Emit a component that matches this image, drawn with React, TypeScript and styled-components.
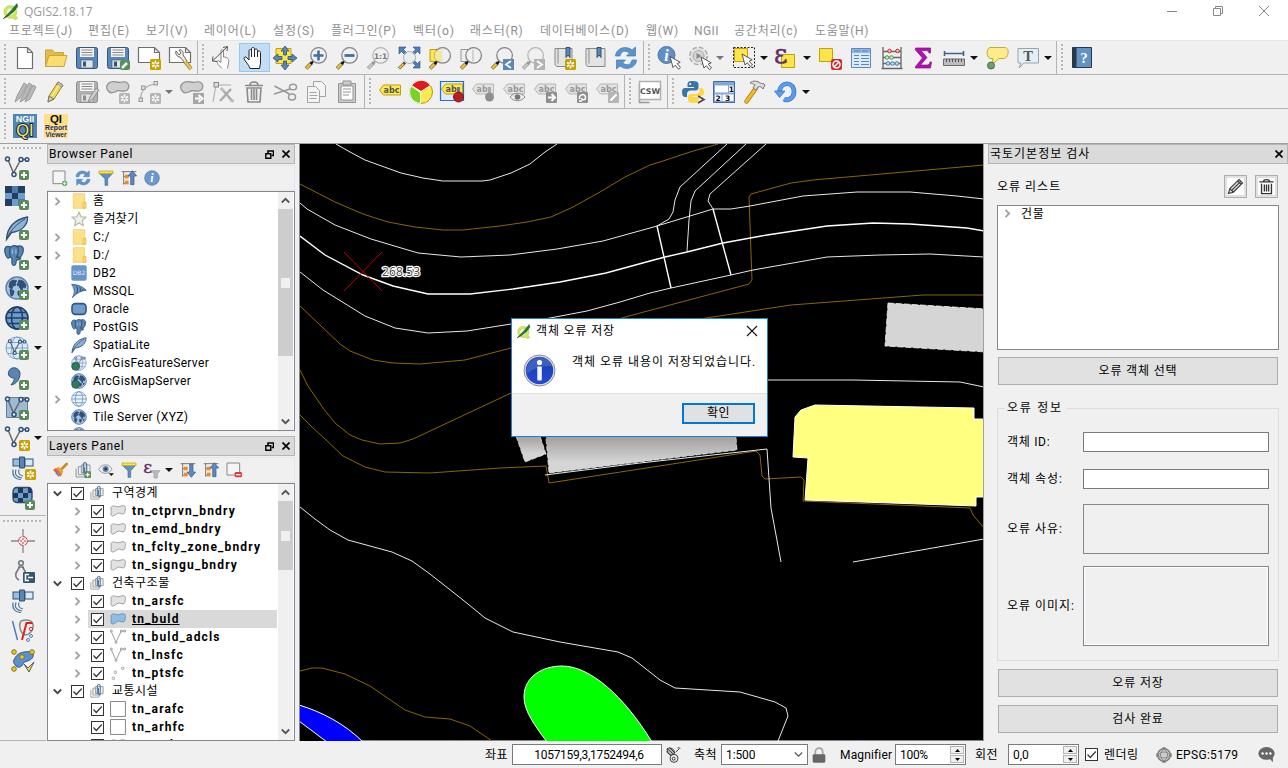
import React, { ReactNode } from "react";
import styled, { createGlobalStyle, css } from "styled-components";

const Global = createGlobalStyle`
  * { box-sizing: border-box; }
  html, body { margin: 0; padding: 0; overflow: hidden; background: #f0f0f0; }
  body { font-family: Roboto, "Noto Sans CJK KR", sans-serif; font-size: 12px; color: #000; }
`;

/* ---------- shared drawing parts ---------- */

const Plus = ({ x = 14, y = 14 }: { x?: number; y?: number }) => (
  <g>
    <rect x={x} y={y} width="10" height="10" rx="2" fill="#5a8c5a" />
    <path d={`M${x + 5} ${y + 2}v6M${x + 2} ${y + 5}h6`} stroke="#fff" strokeWidth="2" />
  </g>
);
const Star = ({ x = 13, y = 13, c = "#c9a000" }: { x?: number; y?: number; c?: string }) => (
  <g>
    <rect x={x} y={y} width="11" height="11" rx="1.5" fill={c} />
    <path
      d={`M${x + 5.5} ${y + 1.5}v8M${x + 2} ${y + 3.5}l7 4M${x + 9} ${y + 3.5}l-7 4`}
      stroke="#fff"
      strokeWidth="1.6"
    />
    <circle cx={x + 5.5} cy={y + 5.5} r="1.2" fill={c} />
  </g>
);
const Lens = ({ gray = false, children }: { gray?: boolean; children?: ReactNode }) => (
  <g>
    <path d="M2 22.5L8 16.5" stroke={gray ? "#999" : "#555"} strokeWidth="3.6" />
    <path d="M2.2 22.3L6.6 17.9" stroke={gray ? "#c4c4c4" : "#f5bf25"} strokeWidth="2.4" />
    <path d="M6.5 18L9.5 15" stroke={gray ? "#999" : "#111"} strokeWidth="2" />
    <circle cx="14.6" cy="9.4" r="7.8" fill="#eef0ee" fillOpacity={0.85} stroke={gray ? "#b5b5b5" : "#858585"} strokeWidth="1.3" />
    {children}
  </g>
);
const Pointer = ({ x, y }: { x: number; y: number }) => (
  <path
    d="M0 0l3 11 2.300-2.300 3.200 4 2-1.700-3.300-3.900 3-1.300z"
    transform={`translate(${x} ${y})`}
    fill="#fff"
    stroke="#555"
    strokeWidth="1"
  />
);
const Tag = ({ c = "#fce94f", s = "#c4a000", t = "#555", text = "abc" }: { c?: string; s?: string; t?: string; text?: string }) => (
  <g>
    <path d="M1.500 9l4-5h17v10h-17z" fill={c} stroke={s} />
    <text x="5.500" y="11.600" fontSize="8" fontFamily="DejaVu Sans" fontWeight="bold" fill={t}>
      {text}
    </text>
  </g>
);
const GrayTag = ({ text = "abc" }: { text?: string }) => <Tag c="#e3e3e3" s="#b5b5b5" t="#999" text={text} />;
const Globe = ({ fill = "#fff", stroke = "#5b84b6", sw = 1 }: { fill?: string; stroke?: string; sw?: number }) => (
  <g fill="none" stroke={stroke} strokeWidth={sw}>
    <circle cx="12" cy="12" r="11" fill={fill} />
    <ellipse cx="12" cy="12" rx="5.500" ry="11" />
    <path d="M1 12h22M3 6.500h18M3 17.500h18" />
  </g>
);
const EarthLand = (
  <g>
    <circle cx="12" cy="12" r="11" fill="#a7c1e0" stroke="#5b7fae" strokeWidth="1.400" />
    <path
      d="M5 6l3-2 4 1-2 2 1 2-3 1-1 3-3-2zM5 13l4 2-1 4-2 1zM14 4l4 1 3 4-1 3-2-1-1 4-2-3-1-2-2-1 1-2zM13 15l3 1-1 4-2-1zM18 16l2-1-1 3z"
      fill="#2f5176"
      stroke="#2f5176"
    />
  </g>
);
const VLine = ({ c = "#2d5275" }: { c?: string }) => (
  <g fill="none" stroke={c} strokeWidth="1.500">
    <path d="M3.500 5l5 12L15 5M18 3.500h2" stroke="#666" />
    <circle cx="2.500" cy="3" r="2" fill="#eef" />
    <circle cx="9" cy="18.500" r="2" fill="#eef" />
    <circle cx="16" cy="3.500" r="2" fill="#eef" />
    <circle cx="22" cy="3.500" r="1.800" fill="#eef" />
  </g>
);
const Elephant = (
  <g fill="#5a84b2" stroke="#2d5275" strokeWidth="1.300">
    <path d="M7 2C3 .500 0 3 1 8c1 4 2 7 4 7l3-2z" />
    <path d="M14 2c3-2 8-1 8 3 0 4-2 8-4 9l-3-1z" />
    <path d="M7 3c3-3 7-3 9 0 1 4 0 7-1 9l-1 2 5 1c-1 2-3 2-5 2l-.500 4c-1 3-4 3-4.500 0L9 15c-3-1-3-8-2-12z" />
    <path d="M9.500 5v5M13.500 5v5" stroke="#9dbbdd" />
  </g>
);
const Feather = (
  <g>
    <path d="M1.500 23.500C2 13 8 4 22.500 1c.500 8-6 14.500-16 15.500z" fill="#8fb1d8" stroke="#2d5275" strokeWidth="1.300" />
    <path d="M1.500 23.500C5 14 12 8 20 3" stroke="#2d5275" fill="none" />
  </g>
);
const Floppy = ({ c = "#5a86b8", d = "#33587f" }: { c?: string; d?: string }) => (
  <g>
    <path d="M3.500 1.500h17a2 2 0 0 1 2 2v17a2 2 0 0 1-2 2h-17a2 2 0 0 1-2-2v-17a2 2 0 0 1 2-2z" fill={c} stroke={d} />
    <rect x="5" y="2" width="14" height="9" fill="#f4f4f4" />
    <path d="M6.500 4h11M6.500 6.500h11M6.500 9h11" stroke="#8a8a8a" />
    <rect x="6" y="14" width="12" height="8" fill="#e2e2e2" stroke={d} strokeWidth=".600" />
    <rect x="8" y="15.500" width="3" height="5" fill={d} />
  </g>
);
const Polygon = ({ c = "#cfcfcf", s = "#8f8f8f" }: { c?: string; s?: string }) => (
  <path d="M3 3c5-4 8 1 13-1 8-2 9 8 3 9-4 1-6-2-10 1-7 3-11-5-6-9z" fill={c} stroke={s} strokeWidth="1.200" />
);
const LayerPolygon = ({ c, s }: { c: string; s: string }) => (
  <path
    d="M1.500 7C3 3 7 4.500 10 5.500c3 .700 7-1.500 10-1.500 4 0 3.500 5 2.500 8 0 4-2 5-5 4-4-1.500-6-1-9 1.500-3 2.500-7 3-7-1 0-3 .500-5 0-9.500z"
    fill={c}
    stroke={s}
    strokeWidth="1.400"
  />
);
const Sheet = ({ x = 4, w = 15, h = 21 }: { x?: number; w?: number; h?: number }) => (
  <path d={`M${x} 1.500h${w - 5}l5 5v${h - 5}h-${w}z M${x + w - 5} 1.500v5h5`} fill="#fff" stroke="#6f6f6f" strokeWidth="1.200" />
);
const Satellite = (
  <g>
    <rect x="2" y="3" width="7" height="7" fill="#9bbbe0" stroke="#2d5275" />
    <rect x="14" y="3" width="8" height="7" fill="#dbe7f4" stroke="#2d5275" />
    <path d="M8.500 1h5v11h-5z" fill="#5a84b2" stroke="#2d5275" />
    <path d="M8 13.500C7 17 8 19 12 20M5 13.500c-2 5 1 8 6 8.500M2 13.500c-1 6 2 10 8 10" fill="none" stroke="#55799f" strokeWidth="1.200" />
  </g>
);
const Funnel = (
  <g>
    <path d="M2 5h20l-7.500 8v10h-4V13z" fill="#5f8fc4" stroke="#41688f" />
    <path d="M1.500 1.500h21v4h-21z" fill="#fbe44c" stroke="#b99b00" />
  </g>
);
const Refresh = (
  <g fill="#5b93cd" stroke="#4279b3" strokeWidth=".700">
    <path d="M1.500 10C2 2 12-1 18 4l3.500-3v9h-9l3-3C11 4 7 5 6 10z" />
    <path d="M22.500 14C22 22 12 25 6 20l-3.500 3v-9h9l-3 3c4.500 3 8.500 2 9.500-3z" />
  </g>
);
const InfoDot = (
  <g>
    <circle cx="12" cy="12" r="11" fill="#6a98cc" stroke="#4c76a6" />
    <text x="12" y="18" textAnchor="middle" fontFamily="Liberation Serif" fontStyle="italic" fontWeight="bold" fontSize="18" fill="#fff">i</text>
  </g>
);
const Sheets = (
  <g fill="#eee" stroke="#8b8f94" strokeWidth="1.400">
    <path d="M1.500 10v12.500h14v-3" fill="none" />
    <path d="M5 7h13v12H5z" />
    <path d="M9.500 4.500h13v12h-13z" />
    <path d="M12.500 17V4c0-4 5-4 5 0v12c0 3-3 3-3 0V7" fill="none" stroke="#4d75a0" strokeWidth="1.800" />
  </g>
);
const TreeArrow = ({ up }: { up: boolean }) => (
  <g>
    <path d="M1 2.500h22M4 3v19M4 10h5M4 20h5" stroke="#777" strokeWidth="1.500" fill="none" />
    <rect x="6" y="7" width="5.500" height="5.500" fill="#f08a24" />
    <rect x="6" y="16" width="5.500" height="5.500" fill="#f08a24" />
    <path
      d={up ? "M17 1l6.500 8h-4v13h-5V9h-4z" : "M17 23l6.500-8h-4V3h-5v12h-4z"}
      fill="#5b8ac0"
      stroke="#315a86"
    />
  </g>
);
const Epsilon = () => (
  <text x="-1" y="16.500" fontFamily="DejaVu Serif" fontSize="26" fill="#5e2f6c" stroke="#5e2f6c" strokeWidth=".5">ε</text>
);
const Logo = (
  <g>
    <path d="M13 4C6 3 2 8 3 14c1 6 7 9 12 7l4 3 3-3-3-3c4-5 1-13-6-14z" fill="#d3e26a" stroke="#b7cc3c" />
    <path d="M13 8c-4-1-6 2-6 5s3 5 6 4 5-8 0-9z" fill="#f7fadf" />
    <path d="M2 22C8 16 13 11 21 1l1 4C18 12 10 18 2 22z" fill="#1f7a33" stroke="#0d5a22" />
  </g>
);

const art: Record<string, ReactNode> = {
  logo: Logo,
  newDoc: <Sheet x={4.5} />,
  open: (
    <g stroke="#c9a436">
      <path d="M1.500 20V4h7l2 2.500h9V20z" fill="#e3bb49" />
      <path d="M1.500 20.500L5 9.500h18l-3 11z" fill="#fbdc70" />
    </g>
  ),
  save: <Floppy />,
  saveAs: (
    <g>
      <Floppy />
      <rect x="14" y="14" width="10" height="10" rx="2" fill="#55915b" />
      <path d="M16 22l5-5" stroke="#fff" strokeWidth="2.500" />
    </g>
  ),
  composer: (
    <g>
      <Sheet x={1.5} w={21} h={15} />
      <Star />
    </g>
  ),
  composerManage: (
    <g>
      <Sheet x={1.5} w={21} h={15} />
      <path d="M8 5c-1 3 1 6 4 6l5 6 2-2-4-6c1-4-2-6-4-5l2 3-2 2z" fill="#eee" stroke="#666" />
      <path d="M17 15.500l6 7.500" stroke="#a8862b" strokeWidth="4" />
      <path d="M17 15.500l6 7.500" stroke="#e8c04b" strokeWidth="2.500" />
    </g>
  ),
  touch: (
    <g fill="#fff" stroke="#888">
      <path d="M11 22.500c-4-4-6-6-4-8l3 2V5c0-2 2.500-2 2.500 0v6c4 0 6 2 5 6l-1 5.500" />
      <path d="M1.500 15L16 1M12 1.500l4.500-1-.5 4.500M6 15.500l-4.500-.5.500-4.500" fill="none" stroke="#555" />
    </g>
  ),
  pan: (
    <path
      d="M8 22.500c-1-4-5-7-6-10 0-2 2-2 3-.500l2 2V5c0-2 2.500-2 2.500 0v-2c0-2 3-2 3 0v1.500c0-2 3-2 3 0V6c1-2 3-1 3 1v10l-1 5.500z M9.500 5v6M12.500 4v7M15.500 6v5"
      fill="#fff"
      stroke="#222"
    />
  ),
  panSel: (
    <g>
      <path d="M3 2.500h15v15H3z" fill="#fbe44c" stroke="#c4a000" />
      <path
        d="M12 0l4 5h-2.500v4h-3V5H8zM12 24l4-5h-2.500v-4h-3v4H8zM0 12l5-4v2.500h4v3H5V16zM24 12l-5-4v2.500h-4v3h4V16z"
        fill="#5a86b8"
        stroke="#2d5275"
        strokeWidth=".800"
      />
    </g>
  ),
  zoomIn: <Lens><path d="M14.500 4.500v10M9.500 9.500h10" stroke="#41709f" strokeWidth="2.600" /></Lens>,
  zoomOut: <Lens><path d="M9.500 9.500h10" stroke="#41709f" strokeWidth="2.800" /></Lens>,
  zoomNative: (
    <Lens gray>
      <text x="14.600" y="12.500" textAnchor="middle" fontFamily="DejaVu Sans" fontWeight="bold" fontSize="7.500" fill="#777">1:1</text>
    </Lens>
  ),
  zoomFull: (
    <g>
      <path d="M2 1h7L6.500 3.500 10 7 8 9 4.500 5.500 2 8zM23 1h-7l2.500 2.500L15 7l2 2 3.500-3.500L23 8zM23 22h-7l2.500-2.500L15 16l2-2 3.500 3.500L23 15z" fill="#4f7fb4" stroke="#2d5275" strokeWidth=".600" />
      <path d="M2 22.500L8 16.500" stroke="#444" strokeWidth="3" />
      <path d="M2.200 22.300L6.600 17.900" stroke="#f5bf25" strokeWidth="2" />
      <circle cx="12.500" cy="11.500" r="6" fill="#e9eef2" fillOpacity=".8" stroke="#aaa" />
    </g>
  ),
  zoomSel: (
    <g>
      <path d="M2 3.500h12v12H2z" fill="#fbe44c" stroke="#c4a000" />
      <Lens />
      <path d="M8 5h6v10h-5c-3-2-3-7-1-10z" fill="#f2e79a" />
    </g>
  ),
  zoomLayer: (
    <g>
      <path d="M2 3.500h12v12H2z" fill="#eee" stroke="#999" />
      <Lens />
      <path d="M14 4v11" stroke="#bbb" />
    </g>
  ),
  zoomLast: (
    <g>
      <Lens />
      <rect x="13" y="13" width="11" height="11" fill="#5a86b8" />
      <path d="M21 15l-5 3.500 5 3.500" stroke="#fff" strokeWidth="1.800" fill="none" />
    </g>
  ),
  zoomNext: (
    <g>
      <Lens gray />
      <rect x="13" y="13" width="11" height="11" fill="#b3b3b3" />
      <path d="M16 15l5 3.500-5 3.500" stroke="#fff" strokeWidth="1.800" fill="none" />
    </g>
  ),
  bookNew: (
    <g>
      <path d="M3 2.500h17v18H6c-2 0-3-1-3-3z M6 3v14.500" fill="#e3e3e3" stroke="#888" />
      <path d="M14 1.500h4v10l-2-2.500-2 2.500z" fill="#5a86b8" stroke="#2d5275" />
      <Star />
    </g>
  ),
  book: (
    <g>
      <path d="M3 2.500h19v18H6c-2 0-3-1-3-3z M6 3v14.500" fill="#e3e3e3" stroke="#888" />
      <path d="M14 1.500h4v10l-2-2.500-2 2.500z" fill="#5a86b8" stroke="#2d5275" />
    </g>
  ),
  refresh: Refresh,
  identify: (
    <g>
      <circle cx="9.500" cy="9" r="8.500" fill="#5f8fc7" stroke="#4c76a6" />
      <text x="9.500" y="14.500" textAnchor="middle" fontFamily="Liberation Serif" fontStyle="italic" fontWeight="bold" fontSize="16" fill="#fff">i</text>
      <Pointer x={13} y={10.5} />
    </g>
  ),
  action: (
    <g>
      <circle cx="10.500" cy="10" r="8.500" fill="#e4e4e4" stroke="#aaa" strokeWidth="2" strokeDasharray="4.500 2.200" />
      <circle cx="10.500" cy="10" r="8" fill="#e4e4e4" />
      <circle cx="10.500" cy="10" r="5.500" fill="#d5d5d5" stroke="#aaa" />
      <path d="M8.500 7v6l5-3z" fill="#888" />
      <Pointer x={13} y={11} />
    </g>
  ),
  select: (
    <g>
      <path d="M1.500 1.500h21v20h-21z" fill="none" stroke="#222" strokeDasharray="2 1.500" />
      <path d="M2.500 2.500h13v13h-13z" fill="#fbe44c" stroke="#c4a000" />
      <Pointer x={10} y={8} />
    </g>
  ),
  selectExpr: (
    <g>
      <path d="M6.500 8.500h13v13h-13z" fill="#fbe44c" stroke="#c4a000" />
      <Epsilon />
    </g>
  ),
  deselect: (
    <g>
      <path d="M1.500 2.500h13v13h-13z" fill="#fbe44c" stroke="#c4a000" />
      <rect x="13" y="13" width="11" height="11" rx="2" fill="#d7282c" />
      <circle cx="18.500" cy="18.500" r="3.500" fill="none" stroke="#fff" strokeWidth="1.500" />
      <path d="M16 21l5-5" stroke="#fff" strokeWidth="1.500" />
    </g>
  ),
  table: (
    <g>
      <path d="M2.500 2.500h19v19h-19z" fill="#dcebfa" stroke="#5b87bb" />
      <path d="M3 3h18v4H3z" fill="#8fb6e2" />
      <path d="M5 5h6M13 5h6M5 9.500h5M12 9.500h8M5 12.500h5M12 12.500h8M5 15.500h5M12 15.500h8M5 18.500h5M12 18.500h8" stroke="#5b87bb" />
    </g>
  ),
  abacus: (
    <g fill="none">
      <path d="M3 1v21M21 1v21M3 5.500h18M3 11.500h18M3 17.500h18M1.500 22.500h21" stroke="#666" strokeWidth="1.300" />
      <g fill="#f7b9b9" stroke="#c9302c"><circle cx="9.500" cy="5" r="1.800" /><circle cx="17.500" cy="5" r="1.800" /></g>
      <g fill="#c6efc6" stroke="#4a9a4a"><circle cx="7" cy="11.500" r="1.800" /><circle cx="11.500" cy="11.500" r="1.800" /></g>
      <g fill="#c4dcf5" stroke="#3f7ab5"><circle cx="8" cy="17.500" r="1.800" /><circle cx="12.500" cy="17.500" r="1.800" /><circle cx="17" cy="17.500" r="1.800" /></g>
    </g>
  ),
  sigma: <path d="M4.500 2h15v5h-1.500c-.500-2-1.500-2.500-4-2.500h-4l6 7-6.500 7.500H15c2.500 0 3.500-.500 4-3h1.500l-1 6h-15v-1.500L11.500 12 4.500 4z" fill="#b012b0" stroke="#8a0d8a" strokeWidth=".700" />,
  measure: (
    <g>
      <path d="M2.500 7.500h19M2.500 5v5M21.500 5v5" stroke="#3f648b" strokeWidth="1.600" />
      <path d="M1.500 13h21v6.500h-21z" fill="#bcbcbc" stroke="#6a6a6a" />
      <path d="M4.500 13v3M7.500 13v3M10.500 13v3M13.500 13v3M16.500 13v3M19.500 13v3" stroke="#555" />
    </g>
  ),
  mapTip: (
    <g>
      <path d="M5 1.500h14c4 0 4.500 3 4 6s-2 5-5 5h-4l-7 6 1-6H6c-5 0-5-10-1-11z" fill="#fcec8a" stroke="#c4a836" />
      <circle cx="6" cy="19.500" r="3.500" fill="#6da06d" stroke="#3f743f" />
    </g>
  ),
  textNote: (
    <g>
      <path d="M2 2.500h20.500v14.500H8L3 22l2-5H2z" fill="#e4eff5" stroke="#9aa5ab" />
      <text x="12" y="14.500" textAnchor="middle" fontFamily="Liberation Serif" fontWeight="bold" fontSize="14.500" fill="#555">T</text>
    </g>
  ),
  help: (
    <g>
      <path d="M2.500 1.500h19v20h-19z" fill="#6391c4" stroke="#26384a" />
      <path d="M2.500 1.500h4v20h-4z" fill="#26384a" />
      <text x="14" y="16.500" textAnchor="middle" fontFamily="Liberation Serif" fontWeight="bold" fontSize="15" fill="#fff">?</text>
    </g>
  ),
  pencils: (
    <path d="M2 22l2-6L11 3l3 2L7 18zM7 22l2-5 7-14 3 2-7 14zM12 22l2-5 6-12 3 2-6 12z" fill="#b9b9b9" stroke="#9a9a9a" />
  ),
  pencil: (
    <g>
      <path d="M4 22l1-6L14 2l5 3L10 19z" fill="#f3da55" stroke="#998223" />
      <path d="M4 22l1-6 5 3z" fill="#d9c9a8" stroke="#777" />
      <path d="M14 2l5 3-1 2-5-3z" fill="#ccc" stroke="#888" />
      <path d="M8 16l7-11" stroke="#fff4a8" />
    </g>
  ),
  saveEdits: (
    <g>
      <Floppy c="#b1b1b1" d="#8d8d8d" />
      <path d="M13 22l2-5 6-9 3 2-7 10z" fill="#ccc" stroke="#8f8f8f" />
    </g>
  ),
  addFeature: (
    <g>
      <Polygon />
      <Star c="#b5b5b5" />
    </g>
  ),
  addCurve: (
    <g>
      <path d="M3.500 19C4 10 9 5 19 4" fill="none" stroke="#aaa" strokeWidth="1.200" />
      <g fill="#ddd" stroke="#999"><rect x="2" y="18" width="3.500" height="3.500" /><rect x="4.500" y="6" width="3.500" height="3.500" /><rect x="17" y="1.500" width="3.500" height="3.500" /></g>
      <Star c="#b5b5b5" />
    </g>
  ),
  moveFeature: (
    <g>
      <Polygon />
      <rect x="13" y="13" width="11" height="11" fill="#a6a6a6" />
      <path d="M15 18.500h5M18.500 15l4 3.500-4 3.500" stroke="#fff" strokeWidth="2" fill="none" />
    </g>
  ),
  nodeTool: (
    <g stroke="#aaa" fill="none">
      <path d="M2 22L5 5h15" />
      <rect x="3" y="2.500" width="4.500" height="4.500" fill="#ddd" stroke="#888" />
      <path d="M10 8l12 14M20 9L9 21" strokeWidth="2.400" />
      <path d="M9 9l4 1M19 21l4-1" strokeWidth="2" stroke="#c2c2c2" />
    </g>
  ),
  trash: (
    <g fill="none" stroke="#8a8a8a" strokeWidth="1.600">
      <path d="M3 5.500h18M8 5C8 1 16 1 16 5M5 8l1 14h12l1-14zM9.500 9v11M12 9v11M14.500 9v11" />
    </g>
  ),
  cut: (
    <g fill="none" stroke="#999" strokeWidth="1.500">
      <path d="M1.500 6l15 8M1 14l16-5" />
      <ellipse cx="20" cy="7" rx="3.500" ry="2.800" />
      <ellipse cx="19" cy="17" rx="3.500" ry="3" />
    </g>
  ),
  copy: (
    <g fill="#f4f4f4" stroke="#a3a3a3">
      <path d="M9.500 1.500h8l4 4v11h-12z" />
      <path d="M3.500 6.500h8l4 4v12h-12z" />
      <path d="M5.500 12.500h7M5.500 15.500h8M5.500 18.500h7" />
    </g>
  ),
  paste: (
    <g fill="#ccc" stroke="#949494">
      <path d="M3.500 3.500h17v19h-17z" />
      <path d="M6 6h12v14H6z" fill="#fff" />
      <path d="M8 1h8v4H8z" />
      <path d="M8 9h8M8 12h8M8 15h6" />
    </g>
  ),
  label: <g transform="translate(0 1)"><Tag /></g>,
  diagram: (
    <g stroke="#fff" strokeWidth="1">
      <circle cx="12" cy="12" r="11.500" fill="#fce94f" stroke="#b59a00" />
      <path d="M12 11.500L2.500 5.500C8-1.500 17-1.500 21.500 5.500z" fill="#e01b1b" />
      <path d="M11.500 12.500v11C2 23-1.500 13 2 6z" fill="#79d326" />
    </g>
  ),
  labelPin: (
    <g>
      <path d="M.5 1.500h23v19H.5z" fill="#dcecff" stroke="#1d6fe0" strokeWidth="1.200" />
      <Tag text="ab" />
      <path d="M18.500 7v10" stroke="#777" strokeWidth="3" />
      <circle cx="18.500" cy="17" r="5" fill="#b51f22" stroke="#8a1416" />
    </g>
  ),
  labelPinGray: (
    <g>
      <GrayTag text="ab" />
      <path d="M18.500 7v10" stroke="#aaa" strokeWidth="3" />
      <circle cx="18.500" cy="17" r="4.500" fill="#8f8f8f" />
    </g>
  ),
  labelEye: (
    <g>
      <GrayTag />
      <path d="M8 17c4-5 11-5 15 0-4 5-11 5-15 0z" fill="#eee" stroke="#888" />
      <circle cx="15.500" cy="17" r="2.800" fill="#777" />
    </g>
  ),
  labelMove: (
    <g>
      <GrayTag />
      <rect x="13" y="12" width="11" height="11" rx="1" fill="#8f8f8f" />
      <path d="M15 17.500h5M18.500 14l3.500 3.500-3.500 3.500" stroke="#fff" strokeWidth="2" fill="none" />
    </g>
  ),
  labelRotate: (
    <g>
      <GrayTag />
      <rect x="13" y="12" width="11" height="11" rx="1" fill="#8f8f8f" />
      <path d="M15.500 19c-1-5 6-6 6-1.500 0 3-4 3-4 .500M15 21h3" stroke="#fff" strokeWidth="1.500" fill="none" />
    </g>
  ),
  labelEdit: (
    <g>
      <GrayTag />
      <rect x="13" y="12" width="11" height="11" rx="1" fill="#b5b5b5" />
      <path d="M15.500 20.500l6-6" stroke="#fff" strokeWidth="2.200" />
    </g>
  ),
  csw: (
    <g>
      <path d="M1.500 4v18.500h10" fill="none" stroke="#999" strokeWidth="1.500" />
      <path d="M1.500 1.500h21v18h-21z" fill="#fff" stroke="#b0b0b0" strokeWidth="1.500" />
      <text x="12" y="13.500" textAnchor="middle" fontFamily="DejaVu Sans" fontWeight="bold" fontSize="7.800" fill="#555">CSW</text>
    </g>
  ),
  python: (
    <g>
      <path d="M12 1c-5 0-5.500 1.500-5.500 3.500V7H13v1H4C1.500 8 1 10 1 12.500S2 17 4 17h2v-3c0-2 1.500-3.500 3.500-3.500h5c2 0 3-1 3-3V4c0-2-2-3-5.500-3z" fill="#3a75a8" />
      <circle cx="9.200" cy="4" r="1" fill="#fff" />
      <path d="M12 23c5 0 5.500-1.500 5.500-3.500V17H11v-1h9c2.500 0 3-2 3-4s-1-4-3-4h-1.500v2.500c0 2-1.500 3.500-3.500 3.500h-5c-2 0-3 1-3 3V20c0 2 2 3 5 3z" fill="#ffd643" />
      <path d="M17 16l6 3.500-6 3.500" fill="none" stroke="#444" strokeWidth="1.600" />
    </g>
  ),
  calendar: (
    <g>
      <path d="M1.500 1.500h21v21h-21z" fill="#7ea8e0" stroke="#44699c" />
      <path d="M3 5.500h13v7H3zM17 5.500h4.500v7H17zM3 14.500h6.500v6.500H3zM10.500 14.500h11v6.500h-11z" fill="#fff" />
      <g fontFamily="DejaVu Sans" fontWeight="bold" fontSize="7.500" fill="#111">
        <text x="16.700" y="12">1</text>
        <text x="3.500" y="20.600">2</text>
        <text x="13" y="20.600">3</text>
      </g>
    </g>
  ),
  hammer: (
    <g>
      <path d="M3.500 21.500L13 8" stroke="#b07e10" strokeWidth="4.500" strokeLinecap="round" />
      <path d="M3.500 21.500L13 8" stroke="#f3b92b" strokeWidth="3" strokeLinecap="round" />
      <path d="M7 3c3-3 8-2 10 0 2 1 4 0 5 2l-2 4c-1-2-3-3-5-2l-2 3-3-2 2-3c-2-1-3-2-5-2z" fill="#ddd" stroke="#777" />
    </g>
  ),
  undo: (
    <g>
      <path d="M5.500 12C6 1 20 1 20 12c0 7-7 9-10 7" fill="none" stroke="#2c6cc4" strokeWidth="4.600" />
      <path d="M5.500 12C6 1 20 1 20 12c0 7-7 9-10 7" fill="none" stroke="#5b9bee" strokeWidth="3.400" />
      <path d="M.5 11h10.500l-5.500 6.500z" fill="#5b9bee" stroke="#2c6cc4" strokeWidth=".700" />
    </g>
  ),
  ngii: (
    <g>
      <rect width="24" height="24" fill="#4e86b5" />
      <text x="12" y="8" textAnchor="middle" fontFamily="Liberation Sans" fontSize="9" fontWeight="bold" fill="#fff">NGII</text>
      <text x="12" y="22.300" textAnchor="middle" fontFamily="Liberation Sans" fontSize="16.500" fill="#f5e57a" stroke="#1a2430" strokeWidth="2" paintOrder="stroke">QI</text>
    </g>
  ),
  report: (
    <g>
      <rect width="24" height="24" fill="#ffe08a" />
      <text x="12" y="9" textAnchor="middle" fontFamily="Liberation Sans" fontSize="11.500" fontWeight="bold" fill="#111">QI</text>
      <text x="12" y="16" textAnchor="middle" fontFamily="Liberation Sans" fontSize="6.800" fontWeight="bold" fill="#222a66">Report</text>
      <text x="12" y="22.600" textAnchor="middle" fontFamily="Liberation Sans" fontSize="6.500" fontWeight="bold" fill="#222a66">Viewer</text>
    </g>
  ),
  addVector: <g><VLine /><Plus /></g>,
  addRaster: (
    <g>
      <rect width="20" height="20" fill="#6e9bd0" />
      <path d="M0 0h7v7H0zM13 0h7v7h-7zM7 7h6v6H7zM0 13h7v7H0z" fill="#243f5e" />
      <path d="M7 0h6v7H7zM13 13h7v7h-7z" fill="#4d79ab" />
      <Plus />
    </g>
  ),
  addSpatialite: <g>{Feather}<Plus /></g>,
  addPostgis: <g><g transform="translate(-1 -1) scale(.88)">{Elephant}</g><Plus /></g>,
  addWms: <g>{EarthLand}<Plus /></g>,
  addWcs: <g><Globe fill="#6e9bd0" stroke="#1f3f60" sw={1.6} /><Plus /></g>,
  addWfs: <g><Globe fill="#dce9f7" stroke="#7ea3cc" /><g transform="translate(3 3) scale(.75)"><VLine /></g><Plus /></g>,
  addText: <g><path d="M4 5c2-5 10-4 11 2 0 7-4 11-9 12 2-3 4-5 3-7-4 0-7-3-5-7z" fill="#5a84b2" stroke="#2d5275" /><Plus /></g>,
  addVirtual: <g><path d="M1.500 1.500h21v20h-21z" fill="#9fb9d4" stroke="#5d7f9f" /><VLine /><Plus /></g>,
  newVector: <g><VLine /><Star x={14} y={14} /></g>,
  satNew: <g>{Satellite}<Star x={14} y={13} /></g>,
  rasterNew: (
    <g>
      <path d="M6 1.500h11c3 0 4 2 4 5v5c0 3-1 5-4 5H6c-3 0-4-2-4-5v-5c0-3 1-5 4-5z" fill="#6e9bd0" stroke="#2d4a68" strokeWidth="1.400" />
      <path d="M7 2h5v5H7zM17 2h2l2 3v2h-4zM12 7h5v5h-5zM2 7h5v5H2zM7 12h5v4H7z" fill="#1f3a58" />
      <Plus />
    </g>
  ),
  crosshair: (
    <g fill="none">
      <path d="M12 0v8M12 16v8M0 12h8M16 12h8" stroke="#888" strokeWidth="1.300" />
      <circle cx="12" cy="12" r="4.500" stroke="#d33" strokeDasharray="5 2" />
      <path d="M12 9v6M9 12h6" stroke="#d33" strokeDasharray="2 2" />
    </g>
  ),
  compass: (
    <g fill="none" stroke="#777" strokeWidth="1.600">
      <circle cx="10" cy="4" r="2.300" />
      <path d="M8.500 8L5 14c-1 4 1 6 3 7M11.500 8l3 5M7 8h6" />
      <rect x="12" y="13" width="12" height="11" rx="1" fill="#34566e" stroke="none" />
      <path d="M18 15.500h-3.500v6H18M17 18.500h5" stroke="#fff" />
    </g>
  ),
  satellite: Satellite,
  topology: (
    <g fill="none">
      <path d="M10 2c6-2 13-1 12 6 0 4-4 8-8 8-4-1-7-9-4-14z" stroke="#888" fill="#eee" strokeWidth="1.500" />
      <path d="M1.500 2l5 19" stroke="#4c7fbd" strokeWidth="1.500" />
      <path d="M11 21l4.500-17h6" stroke="#d22" strokeWidth="2" />
      <circle cx="20" cy="10" r="1.700" stroke="#d22" />
      <circle cx="20" cy="17" r="1.500" stroke="#4c7fbd" />
      <circle cx="17" cy="21" r="1.500" stroke="#4c7fbd" />
    </g>
  ),
  validate: (
    <g>
      <path d="M4 9c3-6 10-7 18-6 2 7-4 9-9 10-1 4-5 7-8 4s-3-6-1-8z" fill="#5c8fd0" stroke="#315a86" />
      <g fill="#e9c829" stroke="#8a7510"><circle cx="3" cy="3" r="2.300" /><circle cx="21" cy="3" r="2.300" /><circle cx="3" cy="20" r="2.300" /><circle cx="11" cy="8" r="2.300" /></g>
      <path d="M13 15l4 4 6-6-5 10z" fill="#ffe14a" stroke="#555" />
    </g>
  ),
  addSel: <g><path d="M1.500 1.500h18v19h-18z" fill="#f5f5f5" stroke="#888" strokeWidth="1.500" /><circle cx="19" cy="20" r="4" fill="#6da06d" /><path d="M19 17.500v5M16.500 20h5" stroke="#dfd" strokeWidth="1.500" /></g>,
  removeSel: <g><path d="M1.500 1.500h19v18h-19z" fill="#f5f5f5" stroke="#888" strokeWidth="1.500" /><rect x="13" y="15" width="11" height="8" rx="2" fill="#e23b3b" /><path d="M15 19h7" stroke="#fff" strokeWidth="2" /></g>,
  filter: Funnel,
  collapse: <TreeArrow up />,
  expand: <TreeArrow up={false} />,
  info: InfoDot,
  folder: (
    <g>
      <path d="M3.500 1h17v22h-17z" fill="#fde08a" stroke="#ecc85a" />
      <path d="M18 14h4.500v9H18z" fill="#f8d570" stroke="#e2b93e" />
    </g>
  ),
  star: <path d="M12 1.500l3 7 7.500.8-5.600 5 1.600 7.700L12 18l-6.500 4 1.600-7.700-5.600-5L9 8.500z" fill="#f0f0ea" stroke="#b3b5a5" strokeWidth="1.600" />,
  db2: (
    <g>
      <rect x=".5" y=".5" width="23" height="23" rx="3" fill="#6693c8" />
      <text x="12" y="15.200" textAnchor="middle" fontFamily="DejaVu Sans" fontSize="9" fill="#e4edf8">DB2</text>
    </g>
  ),
  mssql: (
    <g>
      <path d="M1 2c9 0 17 4 22 9-7 0-14 4-21 11 4-7 4-12-1-20z" fill="#6b96c8" stroke="#33587f" strokeWidth="1.200" />
      <path d="M8 4c3 5 2 9 0 12M13 6c2 3 2 5 1 7M18 9l-1 3" fill="none" stroke="#33587f" strokeWidth="1.600" />
    </g>
  ),
  oracle: <rect x="1.500" y="4" width="21" height="16" rx="5" fill="#6f9bd1" stroke="#33567c" strokeWidth="2.400" />,
  elephant: Elephant,
  feather: Feather,
  arcFeature: <g><Globe fill="#dce9f7" stroke="#7ea3cc" /><g transform="translate(5 2) scale(.7)"><VLine /></g><circle cx="7" cy="17" r="6" fill="#2c7f52" stroke="#1e3f6a" /></g>,
  arcMap: <g>{EarthLand}<circle cx="7" cy="17" r="6" fill="#2c7f52" stroke="#1e3f6a" /></g>,
  ows: <Globe fill="#eef4fb" stroke="#6e98c9" sw={1.3} />,
  earth: EarthLand,
  brush: (
    <g>
      <path d="M14 11l8-8" stroke="#c78a2b" strokeWidth="4" strokeLinecap="round" />
      <path d="M2 12l8-5 7 7-4 8z" fill="#e8a23a" />
      <path d="M2 11l4-2 9 9-2 4z" fill="#ea7a3a" />
      <path d="M2 12l4-1 4 4-3 3z" fill="#e05a50" />
      <path d="M5 17l3-1 4 4-2 2z" fill="#5d86c8" />
    </g>
  ),
  sheetsAdd: <g>{Sheets}<Plus /></g>,
  sheets: Sheets,
  eye: (
    <g>
      <path d="M1 11c5-9 16-9 20 0-5 8-15 8-20 0z" fill="#eee" stroke="#999" strokeWidth="1.500" />
      <circle cx="11.500" cy="10.500" r="4.500" fill="#5c83ad" />
      <circle cx="11.500" cy="10.500" r="2" fill="#1e3248" />
      <path d="M16 17h8l-4 4z" fill="#111" />
    </g>
  ),
  exprFilter: <g><Epsilon /><path d="M11 13h13l-4 4.500V24h-5v-6.500z" fill="#bbb" stroke="#999" /></g>,
  poly: <LayerPolygon c="#e2e2e2" s="#999" />,
  polyBlue: <LayerPolygon c="#8fbde4" s="#5f92c0" />,
  line: (
    <g fill="none" stroke="#888" strokeWidth="1.200">
      <path d="M2 4l7 16L17 3h6" />
      <circle cx="2" cy="3" r="1.500" fill="#fff" /><circle cx="9" cy="20" r="1.500" fill="#fff" /><circle cx="17" cy="3" r="1.500" fill="#fff" /><circle cx="22" cy="3" r="1.500" fill="#fff" />
    </g>
  ),
  points: (
    <g fill="#eee" stroke="#999" strokeWidth="1.200">
      <circle cx="5" cy="20" r="2" /><circle cx="8" cy="11" r="2" /><circle cx="19" cy="5" r="2" />
    </g>
  ),
  swatch: <path d="M.8.8h22.400v22.400H.8z" fill="#fff" stroke="#888" strokeWidth="1.500" />,
  editDark: (
    <g>
      <rect width="24" height="24" fill="#fff" />
      <path d="M2 22l2-7L17 2l5 5L9 20zM4 15l5 5M7 17L19 5M15 4l5 5" fill="#ddd" stroke="#333" strokeWidth="1.500" />
    </g>
  ),
  trashDark: (
    <g fill="none" stroke="#333" strokeWidth="1.900">
      <rect width="24" height="24" fill="#fff" stroke="none" />
      <path d="M2 5.500h20M8 4.500c0-3 8-3 8 0M5 8v14h14V8M9 9v10M12 9v10M15 9v10" />
    </g>
  ),
  mouse: (
    <g fill="none" stroke="#333" strokeWidth="1.400">
      <path d="M3 3c6-4 12 1 11 6s-8 3-10-1z" fill="#bbb" />
      <path d="M3 2l12 11M7 1l8 8M2 7l11 10M21 3l-5 5M19 1l4 1" />
      <circle cx="13.500" cy="17" r="6" fill="#eee" />
      <circle cx="13" cy="17.500" r="2.200" />
    </g>
  ),
  lock: (
    <g>
      <path d="M6.500 12V7c0-7 11-7 11 0v5" fill="none" stroke="#a5a5a5" strokeWidth="2.600" />
      <rect x="2.500" y="11" width="19" height="12.500" rx="2" fill="#666" />
    </g>
  ),
  crs: (
    <g>
      <path d="M12 0v24M0 12h24" stroke="#999" strokeWidth="5" />
      <circle cx="12" cy="12" r="9.500" fill="#ccc" stroke="#777" strokeWidth="2" />
      <path d="M12 3c-7 5-7 13 0 18 7-5 7-13 0-18zM3 12c5-6 13-6 18 0-5 6-13 6-18 0z" fill="none" stroke="#888" strokeWidth="1.500" />
    </g>
  ),
  bubble: (
    <g>
      <ellipse cx="12" cy="10.500" rx="11.500" ry="9" fill="#666" />
      <path d="M15 16l6 7v-9z" fill="#666" />
      <circle cx="6.500" cy="10.500" r="1.700" fill="#fff" /><circle cx="12" cy="10.500" r="1.700" fill="#fff" /><circle cx="17.500" cy="10.500" r="1.700" fill="#fff" />
    </g>
  ),
};

const Svg = styled.svg`
  display: block;
  flex: none;
`;
const IconSvg = styled(Svg)`
  overflow: visible;
`;
const Icon = ({ name, size = 24 }: { name: string; size?: number }) => (
  <IconSvg width={size} height={size} viewBox="0 0 24 24">{art[name]}</IconSvg>
);

/* ---------- window chrome ---------- */

const Window = styled.div`
  width: 1288px;
  height: 768px;
  display: flex;
  flex-direction: column;
  background: #f0f0f0;
`;
const Label = styled.span<{ $ls?: number; $w?: number; $bold?: boolean; $under?: boolean }>`
  white-space: nowrap;
  letter-spacing: ${(p) => p.$ls ?? 0}px;
  font-size: 12px;
  line-height: 16px;
  ${(p) => p.$w && css`width: ${p.$w}px; flex: none;`}
  ${(p) => p.$bold && css`font-weight: 700;`}
  ${(p) => p.$under && css`text-decoration: underline;`}
`;
const TitleBar = styled.header`
  height: 22px;
  flex: none;
  display: flex;
  align-items: center;
  background: #fff;
  padding: 0 18px 0 2px;
`;
const WindowTitle = styled.span`
  font: 12px/16px "Open Sans", sans-serif;
  color: #999;
  margin: 2px 0 0 5px;
  flex: 1;
`;
const WindowButtons = styled.div`
  display: flex;
  gap: 34px;
`;
const MenuBar = styled.nav`
  height: 19px;
  flex: none;
  display: flex;
  background: #fff;
  padding: 1px 0 0 9px;
  border-bottom: 1px solid #e6e6e6;
`;
const MenuItem = styled.span<{ $w: number; $ls: number }>`
  width: ${(p) => p.$w}px;
  letter-spacing: ${(p) => p.$ls}px;
  white-space: nowrap;
  line-height: 16px;
  color: #8f8f8f;
`;
const ToolRow = styled.div`
  height: 34px;
  flex: none;
  display: flex;
  border-bottom: 1px solid #b4b4b4;
`;
const LastToolRow = styled(ToolRow)`
  border-bottom: 0;
`;
const ToolGroup = styled.div<{ $w?: number }>`
  display: flex;
  align-items: center;
  ${(p) => (p.$w ? css`width: ${p.$w}px; border-right: 1px solid #b4b4b4;` : css`flex: 1;`)}
`;
const Grip = styled.div`
  width: 2px;
  height: 27px;
  margin: 0 4px 0 4px;
  flex: none;
  background: repeating-linear-gradient(to bottom, #b8b8b8 0 2px, transparent 2px 4px);
`;
const Tool = styled.button<{ $w?: number; $active?: boolean }>`
  width: ${(p) => p.$w ?? 31}px;
  height: 29px;
  flex: none;
  display: flex;
  align-items: center;
  gap: 4px;
  padding: 0 2px;
  border: 1px solid ${(p) => (p.$active ? "#90c8f6" : "transparent")};
  background: ${(p) => (p.$active ? "#c2ddf4" : "transparent")};
`;
const Caret = ({ gray = false }: { gray?: boolean }) => (
  <Svg width="8" height="4" viewBox="0 0 8 4"><path d="M0 0h8L4 4z" fill={gray ? "#777" : "#111"} /></Svg>
);

type ToolDef = string | { n: string; w?: number; gray?: boolean; active?: boolean };
const Tools = ({ items, width }: { items: ToolDef[]; width?: number }) => (
  <ToolGroup $w={width}>
    <Grip />
    {items.map((it) => {
      const d = typeof it === "string" ? { n: it } : it;
      return (
        <Tool key={d.n} $w={d.w} $active={d.active}>
          <Icon name={d.n} />
          {d.w && <Caret gray={d.gray} />}
        </Tool>
      );
    })}
  </ToolGroup>
);

const Body = styled.main`
  flex: 1;
  min-height: 0;
  display: flex;
  border-top: 1px solid #a0a0a0;
`;
const SideBar = styled.aside`
  width: 46px;
  flex: none;
  padding-top: 3px;
  border-bottom: 1px solid #b4b4b4;
`;
const SideGrip = styled.div`
  height: 2px;
  margin: 0 4px 4px 3px;
  background: repeating-linear-gradient(to right, #b8b8b8 0 2px, transparent 2px 4px);
`;
const SideRule = styled.div`
  border-top: 1px solid #b4b4b4;
  margin: 2px 0 4px;
`;
const SideTool = styled.div<{ $indent: number }>`
  height: 30px;
  display: flex;
  align-items: center;
  padding-left: ${(p) => p.$indent}px;
  gap: 5px;
`;
const Dock = styled.section<{ $w: number }>`
  width: ${(p) => p.$w}px;
  flex: none;
  display: flex;
  flex-direction: column;
`;
const DockTitle = styled.header`
  height: 20px;
  flex: none;
  display: flex;
  align-items: center;
  gap: 8px;
  border: 1px solid #b6b6b6;
  background: #dadada;
  padding: 0 4px 0 1px;
`;
const Grow = styled.span`
  flex: 1;
`;
const DockTools = styled.div`
  height: 26px;
  margin-top: 1px;
  flex: none;
  display: flex;
  align-items: center;
  gap: 7px;
  padding-left: 5px;
  border: 1px solid #e6e6e6;
  border-left: 0;
`;
const MenuTool = styled.span`
  display: flex;
  align-items: center;
  gap: 5px;
`;
const TreeBox = styled.div<{ $h: number; $mb?: number }>`
  height: ${(p) => p.$h}px;
  margin-bottom: ${(p) => p.$mb ?? 0}px;
  flex: none;
  display: flex;
  overflow: hidden;
  background: #fff;
  border: 1px solid #828790;
`;
const Rows = styled.div`
  flex: 1;
  min-width: 0;
`;
const BrowserRow = styled.div`
  height: 18px;
  display: grid;
  grid-template-columns: 22px 22px 1fr;
  align-items: center;
  padding-left: 1px;
`;
const ArrowCell = styled.span`
  display: flex;
  justify-content: center;
  padding-right: 5px;
`;
const LayerRow = styled.div<{ $child?: boolean }>`
  height: 18px;
  display: flex;
  align-items: center;
  padding-left: ${(p) => (p.$child ? 20 : 0)}px;
`;
const LayerBody = styled.div<{ $selected?: boolean }>`
  flex: 1;
  height: 18px;
  display: flex;
  align-items: center;
  padding-left: 3px;
  background: ${(p) => (p.$selected ? "#d9d9d9" : "transparent")};
  margin-right: 1px;
`;
const LayerArrow = styled.span`
  width: 20px;
  padding-right: 2px;
  display: flex;
  justify-content: center;
`;
const Check = styled.span`
  width: 13px;
  height: 13px;
  flex: none;
  border: 1px solid #333;
  background: #fff;
  margin-right: 6px;
`;
const Checked = () => (
  <Check><Svg width="11" height="11" viewBox="0 0 11 11"><path d="M1.500 5.500l2.800 3L9.800 2.500" fill="none" stroke="#333" strokeWidth="1.200" /></Svg></Check>
);
const Bar = styled.div`
  width: 15px;
  flex: none;
  display: flex;
  flex-direction: column;
  align-items: center;
  background: #f0f0f0;
  margin-right: 1px;
`;
const BarArrow = styled.div`
  height: 17px;
  display: flex;
  align-items: center;
`;
const Thumb = styled.div<{ $h: number }>`
  width: 15px;
  height: ${(p) => p.$h}px;
  display: flex;
  align-items: center;
  justify-content: center;
  background: #cdcdcd;
`;
const Notch = styled.span`
  width: 9px;
  height: 10px;
  background: #f0f0f0;
`;
const Chev = ({ dir, c = "#555", w = 1.8 }: { dir: "up" | "down" | "right"; c?: string; w?: number }) => (
  <Svg width="9" height="9" viewBox="0 0 9 9">
    <path
      d={dir === "up" ? "M.8 6.500l3.700-3.700 3.700 3.700" : dir === "down" ? "M.8 2.500l3.700 3.700 3.700-3.700" : "M2.500.8l3.700 3.700-3.700 3.700"}
      fill="none"
      stroke={c}
      strokeWidth={w}
    />
  </Svg>
);
const ScrollBar = ({ thumb }: { thumb: number }) => (
  <Bar>
    <BarArrow><Chev dir="up" /></BarArrow>
    <Thumb $h={thumb}><Notch /></Thumb>
    <Grow />
    <BarArrow><Chev dir="down" /></BarArrow>
  </Bar>
);
const FloatIcon = () => (
  <Svg width="9" height="9" viewBox="0 0 9 9"><path d="M3 3V1h5.500v4.500H6.500" fill="none" stroke="#000" strokeWidth="1.600" /><path d="M.8 3.800h5v4.500h-5z" fill="none" stroke="#000" strokeWidth="1.400" /></Svg>
);
const CloseIcon = () => (
  <Svg width="8" height="8" viewBox="0 0 8 8"><path d="M.5.500l7 7M7.500.500l-7 7" stroke="#000" strokeWidth="1.700" /></Svg>
);

/* ---------- map ---------- */

const MapFrame = styled.section`
  position: relative;
  width: 685px;
  flex: none;
  margin: 0 4px 0 4px;
  background: #000;
  border-left: 1px solid #828790;
  border-right: 1px solid #a0a0a0;
  border-bottom: 1px solid #828790;
`;
const white = [
  "336,144 350,152 365,160 401,173 423,178 443,181 482,181 490,180 511,173 530,164 545,152 557,144",
  "300,203 307,209 335,225 371,239 418,253 461,257 510,255 557,249 603,241 650,228 657,226 713,209 731,209 750,206 803,196 857,192 910,192 957,196 984,199",
  "300,272 323,290 365,316 395,328 428,333 467,331 511,324 550,318 587,311 620,302 650,293 671,288 731,275 753,270 827,257 880,255 930,254 984,257",
  "727,144 680,187 675,200 673,212 669,219 657,226",
  "746,144 695,191 691,201 689,220 687,251",
  "766,144 710,194 708,201 713,209",
  "767,380 853,380 960,382 984,387",
  "545,475 640,463 767,449 771,508 781,562",
  "853,562 984,539",
  "300,507 315,519 330,530 348,540 392,552 412,561 430,574 463,600 485,618 513,632 560,642 618,652 632,658 660,680 675,688 740,692 775,702 786,708 788,716 778,741",
];
const whiteBold = [
  "300,236 325,255 363,275 393,286 428,294 470,294 513,289 560,282 606,273 650,261 665,257 687,252 723,243 767,235 827,226 873,223 910,224 967,228 984,231",
  "657,226 671,288",
  "713,209 731,275",
];
const brown = [
  "300,184 335,202 363,214 388,222 415,227 443,230 463,230 500,226 527,222 551,217 573,207 600,192 625,177 650,165 663,161 690,152 718,144",
  "984,165 813,180 791,183 751,194 749,197 752,280 749,284 640,313 560,335",
  "300,306 340,344 350,351 373,360 393,363 420,364 465,360 511,348 706,318 791,305 923,295 984,295",
  "300,370 308,386 323,408 335,423 350,435 362,440 380,444 400,443 413,439 511,393",
  "300,415 312,427 325,439 343,456 365,467 385,472 430,473 500,468 546,466 549,483 640,469 756,451 760,455 762,476 765,479 801,477 804,480 803,501 970,508 973,515 984,528",
  "300,671 312,668 322,668 345,674 370,686 405,710 425,717 450,719 470,726 492,741",
];
const MapCanvas = () => (
  <Svg width="683" height="597" viewBox="300 144 683 597">
    <defs>
      <linearGradient id="shade" x1="0" y1="0" x2="0" y2="1">
        <stop offset="0" stopColor="#a0a0a0" />
        <stop offset=".7" stopColor="#d5d5d5" />
      </linearGradient>
    </defs>
    <g fill="none" stroke="#8a6508">{brown.map((p) => <polyline key={p} points={p} />)}</g>
    <path d="M516 436h24l6 18-21 8z" fill="url(#shade)" />
    <path d="M516 436l9 26 21-8-6-18" fill="none" stroke="#eee" strokeWidth=".7" strokeDasharray="5 2" />
    <path d="M546 437h190l1 13-188 23z" fill="url(#shade)" />
    <path d="M546 439l3 34 188-23-1-13" fill="none" stroke="#eee" strokeWidth=".7" strokeDasharray="5 2" />
    <path d="M888 303l98 6v43l-101-6z" fill="#d5d5d5" stroke="#f4f4f4" strokeWidth=".8" strokeDasharray="6 2" />
    <path d="M815 405l159 3v11h12v78h-10v9l-171-6 3-42-15-1 2-40 6-7z" fill="#ffff80" stroke="#fff" />
    <g fill="none" stroke="#e8e8e8">{white.map((p) => <polyline key={p} points={p} />)}</g>
    <g fill="none" stroke="#fff" strokeWidth="1.400">{whiteBold.map((p) => <polyline key={p} points={p} />)}</g>
    <path d="M299 705c23 7 46 19 64 37h-65z" fill="#0000ff" stroke="#fff" />
    <path d="M299 721l28 21h-28z" fill="#000" />
    <path d="M299 721l28 21" stroke="#fff" />
    <path d="M547 742c-12-16-23-31-23-45 0-20 18-31 38-31 28 0 62 30 90 76z" fill="#00ff00" stroke="#fff" />
    <path d="M344 252l38 39M382 252l-38 39" stroke="#c00000" />
    <text x="382" y="276" fontFamily="Open Sans" fontSize="12" fill="#444" stroke="#fff" strokeWidth="2.500" paintOrder="stroke" textLength="38">268.53</text>
  </Svg>
);

/* ---------- dialog ---------- */

const Dialog = styled.div`
  position: absolute;
  left: 211px;
  top: 174px;
  width: 257px;
  height: 119px;
  display: flex;
  flex-direction: column;
  background: #fff;
  border: 1px solid #1883d7;
`;
const DialogTitle = styled.header`
  height: 23px;
  display: flex;
  align-items: center;
  padding: 1px 9px 0 4px;
`;
const DialogText = styled.div`
  flex: 1;
  display: flex;
  align-items: flex-start;
  padding: 12px 0 0 11px;
  gap: 16px;
`;
const DialogMessage = styled.div`
  display: flex;
`;
const DialogFoot = styled.footer`
  height: 43px;
  display: flex;
  justify-content: flex-end;
  padding: 9px 12px 0;
  background: #f0f0f0;
  border-top: 1px solid #dfdfdf;
`;
const OkButton = styled.button`
  width: 73px;
  height: 21px;
  padding: 0 0 1px;
  border: 2px solid #0078d7;
  background: #e1e1e1;
  font: 12px/14px Roboto, "Noto Sans CJK KR", sans-serif;
  letter-spacing: 0.5px;
  color: #000;
`;

/* ---------- inspection dock ---------- */

const Inspect = styled.div`
  flex: 1;
  display: flex;
  flex-direction: column;
  padding: 11px 9px 0 9px;
`;
const ListHead = styled.div`
  height: 23px;
  flex: none;
  display: flex;
  align-items: center;
  gap: 8px;
  padding-right: 1px;
`;
const SquareButton = styled.button`
  width: 23px;
  height: 23px;
  padding: 2px;
  display: flex;
  border: 1px solid #adadad;
  background: #e1e1e1;
`;
const ErrorList = styled.div`
  height: 145px;
  flex: none;
  margin-top: 7px;
  background: #fff;
  border: 1px solid #828790;
  padding-left: 5px;
`;
const ErrorRow = styled.div`
  height: 15px;
  display: flex;
  align-items: center;
  gap: 9px;
`;
const WideButton = styled.button<{ $mt: number }>`
  height: 28px;
  flex: none;
  margin: ${(p) => p.$mt}px 1px 0;
  padding: 0 0 1px;
  border: 1px solid #adadad;
  background: #e1e1e1;
  color: #000;
  font: 12px/16px Roboto, "Noto Sans CJK KR", sans-serif;
  letter-spacing: 0.85px;
`;
const GroupBox = styled.fieldset`
  height: 261px;
  flex: none;
  margin: 15px 0 0;
  padding: 16px 9px 0;
  border: 1px solid #dcdcdc;
  display: flex;
  flex-direction: column;
`;
const Legend = styled.legend`
  padding: 0 4px 0 2px;
  margin-left: -2px;
  font-size: 12px;
  line-height: 16px;
  font-weight: 500;
  letter-spacing: 1.7px;
  color: #333;
`;
const Field = styled.div<{ $h: number; $mb: number }>`
  height: ${(p) => p.$h}px;
  flex: none;
  margin-bottom: ${(p) => p.$mb}px;
  display: grid;
  grid-template-columns: 76px 186px;
  align-items: center;
`;
const Input = styled.div<{ $kind?: "area" | "image" }>`
  height: 100%;
  border: 1px solid ${(p) => (p.$kind ? "#828790" : "#7a7a7a")};
  background: ${(p) => (p.$kind ? "#f0f0f0" : "#fff")};
  ${(p) => p.$kind === "image" && css`box-shadow: inset 0 0 0 1px #fff;`}
`;

/* ---------- status bar ---------- */

const Status = styled.footer`
  height: 27px;
  flex: none;
  display: flex;
  align-items: center;
  padding-left: 485px;
`;
const StatusBox = styled.div<{ $w: number; $center?: boolean; $mr: number }>`
  width: ${(p) => p.$w}px;
  height: 21px;
  margin-right: ${(p) => p.$mr}px;
  flex: none;
  display: flex;
  align-items: center;
  justify-content: ${(p) => (p.$center ? "center" : "space-between")};
  padding: 0 ${(p) => (p.$center ? 0 : 1)}px 0 4px;
  background: #fff;
  border: 1px solid #7a7a7a;
`;
const Space = styled.span<{ $w: number }>`
  width: ${(p) => p.$w}px;
  flex: none;
`;
const ComboArrow = styled.span`
  padding-right: 3px;
`;
const Spinner = styled.span`
  display: grid;
  grid-template-rows: 8px 8px;
  gap: 1px;
`;
const SpinKey = styled.span`
  width: 14px;
  display: flex;
  align-items: center;
  justify-content: center;
  border: 1px solid #b5b5b5;
  background: #f0f0f0;
`;
const Spin = () => (
  <Spinner>
    <SpinKey><Svg width="5" height="3" viewBox="0 0 5 3"><path d="M0 3h5L2.500 0z" /></Svg></SpinKey>
    <SpinKey><Svg width="5" height="3" viewBox="0 0 5 3"><path d="M0 0h5L2.500 3z" /></Svg></SpinKey>
  </Spinner>
);

/* ---------- data ---------- */

const menus: [string, number, number][] = [
  ["프로젝트(J)", 79, 0.7], ["편집(E)", 58, 1], ["보기(V)", 58, 0.9], ["레이어(L)", 69, 0.8], ["설정(S)", 58, 0.9],
  ["플러그인(P)", 82, 0.8], ["벡터(o)", 57, 0.9], ["래스터(R)", 70, 0.8], ["데이터베이스(D)", 106, 0.8], ["웹(W)", 48, 0.7],
  ["NGII", 40, 0.4], ["공간처리(c)", 81, 0.8], ["도움말(H)", 70, 0.7],
];
const sideTop: [string, boolean, number][] = [
  ["addVector", false, 5], ["addRaster", false, 5], ["addSpatialite", false, 5], ["addPostgis", true, 5], ["addWms", true, 5],
  ["addWcs", false, 5], ["addWfs", true, 5], ["addText", false, 5], ["addVirtual", false, 5], ["newVector", true, 5],
  ["satNew", false, 11], ["rasterNew", false, 11],
];
const sideBottom = ["crosshair", "compass", "satellite", "topology", "validate"];
const browser: [string, string, boolean][] = [
  ["folder", "홈", true], ["star", "즐겨찾기", false], ["folder", "C:/", true], ["folder", "D:/", true], ["db2", "DB2", false],
  ["mssql", "MSSQL", false], ["oracle", "Oracle", false], ["elephant", "PostGIS", false], ["feather", "SpatiaLite", false],
  ["arcFeature", "ArcGisFeatureServer", false], ["arcMap", "ArcGisMapServer", false], ["ows", "OWS", true],
  ["earth", "Tile Server (XYZ)", false], ["earth", "WCS", false],
];
type Layer = { t: string; icon?: string; leaf?: boolean; sel?: boolean };
const layers: Layer[] = [
  { t: "구역경계" },
  { t: "tn_ctprvn_bndry", icon: "poly" },
  { t: "tn_emd_bndry", icon: "poly" },
  { t: "tn_fclty_zone_bndry", icon: "poly" },
  { t: "tn_signgu_bndry", icon: "poly" },
  { t: "건축구조물" },
  { t: "tn_arsfc", icon: "poly" },
  { t: "tn_buld", icon: "polyBlue", sel: true },
  { t: "tn_buld_adcls", icon: "line" },
  { t: "tn_lnsfc", icon: "line" },
  { t: "tn_ptsfc", icon: "points" },
  { t: "교통시설" },
  { t: "tn_arafc", icon: "swatch", leaf: true },
  { t: "tn_arhfc", icon: "swatch", leaf: true },
  { t: "tn_ctrln", icon: "poly", leaf: true },
];

export default function App() {
  return (
    <Window>
      <Global />
      <TitleBar>
        <Icon name="logo" size={17} />
        <WindowTitle>QGIS2.18.17</WindowTitle>
        <WindowButtons>
          <Svg width="12" height="12" viewBox="0 0 12 12"><path d="M1 6.500h10" stroke="#888" /></Svg>
          <Svg width="12" height="12" viewBox="0 0 12 12"><path d="M1.500 3.500h7v7h-7zM3.500 3.500v-2h7v7h-2" fill="none" stroke="#888" /></Svg>
          <Svg width="12" height="12" viewBox="0 0 12 12"><path d="M1 1l10 10M11 1L1 11" stroke="#888" /></Svg>
        </WindowButtons>
      </TitleBar>
      <MenuBar>
        {menus.map(([t, w, ls]) => <MenuItem key={t} $w={w} $ls={ls}>{t}</MenuItem>)}
      </MenuBar>
      <ToolRow>
        <Tools width={198} items={["newDoc", "open", "save", "saveAs", "composer", "composerManage"]} />
        <Tools
          width={446}
          items={["touch", { n: "pan", active: true }, "panSel", "zoomIn", "zoomOut", "zoomNative", "zoomFull", "zoomSel", "zoomLayer", "zoomLast", "zoomNext", "bookNew", "book", "refresh"]}
        />
        <Tools
          width={413}
          items={["identify", { n: "action", w: 44, gray: true }, { n: "select", w: 43 }, { n: "selectExpr", w: 43 }, "deselect", "table", "abacus", "sigma", { n: "measure", w: 43 }, "mapTip", { n: "textNote", w: 43 }]}
        />
        <Tools items={["help"]} />
      </ToolRow>
      <ToolRow>
        <Tools
          width={365}
          items={["pencils", "pencil", "saveEdits", "addFeature", { n: "addCurve", w: 43, gray: true }, "moveFeature", "nodeTool", "trash", "cut", "copy", "paste"]}
        />
        <Tools width={260} items={["label", "diagram", "labelPin", "labelPinGray", "labelEye", "labelMove", "labelRotate", "labelEdit"]} />
        <Tools width={43} items={["csw"]} />
        <Tools items={["python", "calendar", "hammer", { n: "undo", w: 43 }]} />
      </ToolRow>
      <LastToolRow>
        <Tools items={["ngii", "report"]} />
      </LastToolRow>
      <Body>
        <SideBar>
          <SideGrip />
          {sideTop.map(([n, menu, x]) => (
            <SideTool key={n} $indent={x}>
              <Icon name={n} />
              {menu && <Caret />}
            </SideTool>
          ))}
          <SideRule />
          <SideGrip />
          {sideBottom.map((n) => <SideTool key={n} $indent={11}><Icon name={n} /></SideTool>)}
        </SideBar>
        <Space $w={1} />
        <Dock $w={248}>
          <DockTitle>
            <Label $ls={0.55}>Browser Panel</Label>
            <Grow />
            <FloatIcon />
            <CloseIcon />
          </DockTitle>
          <DockTools>
            {["addSel", "refresh", "filter", "collapse", "info"].map((n) => <Icon key={n} name={n} size={16} />)}
          </DockTools>
          <TreeBox $h={240} $mb={5}>
            <Rows>
              {browser.map(([icon, t, arrow]) => (
                <BrowserRow key={t}>
                  <ArrowCell>{arrow && <Chev dir="right" c="#a0a0a0" />}</ArrowCell>
                  <Icon name={icon} size={16} />
                  <Label $ls={0.35}>{t}</Label>
                </BrowserRow>
              ))}
            </Rows>
            <ScrollBar thumb={147} />
          </TreeBox>
          <DockTitle>
            <Label $ls={0.6}>Layers Panel</Label>
            <Grow />
            <FloatIcon />
            <CloseIcon />
          </DockTitle>
          <DockTools>
            {["brush", "sheetsAdd", "eye", "filter"].map((n) => <Icon key={n} name={n} size={16} />)}
            <MenuTool><Icon name="exprFilter" size={16} /><Caret /></MenuTool>
            {["expand", "collapse", "removeSel"].map((n) => <Icon key={n} name={n} size={16} />)}
          </DockTools>
          <TreeBox $h={258}>
            <Rows>
              {layers.map((l) => (
                <LayerRow key={l.t} $child={!!l.icon}>
                  <LayerArrow>{!l.leaf && <Chev dir={l.icon ? "right" : "down"} c={l.icon ? "#a0a0a0" : "#444"} />}</LayerArrow>
                  <LayerBody $selected={l.sel}>
                    <Checked />
                    <Icon name={l.icon ?? "sheets"} size={l.icon ? 16 : 14} />
                    <Space $w={l.icon ? 6 : 8} />
                    <Label $bold={!!l.icon} $ls={l.icon ? 1.15 : 0.5} $under={l.sel}>{l.t}</Label>
                  </LayerBody>
                </LayerRow>
              ))}
            </Rows>
            <ScrollBar thumb={69} />
          </TreeBox>
        </Dock>
        <MapFrame>
          <MapCanvas />
          <Dialog>
            <DialogTitle>
              <Icon name="logo" size={15} />
              <Space $w={5} />
              <Label $ls={0.85}>객체 오류 저장</Label>
              <Grow />
              <Svg width="12" height="12" viewBox="0 0 12 12"><path d="M1 1l10 10M11 1L1 11" stroke="#111" strokeWidth="1.100" /></Svg>
            </DialogTitle>
            <DialogText>
              <Svg width="33" height="33" viewBox="0 0 33 33">
                <defs>
                  <linearGradient id="ball" x1="0" y1="0" x2="0" y2="1">
                    <stop offset="0" stopColor="#1a3fa0" /><stop offset="1" stopColor="#2348d8" />
                  </linearGradient>
                </defs>
                <circle cx="16.500" cy="16.500" r="15.500" fill="#e8e8e8" stroke="#888" />
                <circle cx="16.500" cy="16.500" r="13.800" fill="url(#ball)" />
                <path d="M3.500 15C5 6 12 3 17 3c6 0 11 4 12.500 9-9 0-18 1-26 8z" fill="#6d8be0" fillOpacity=".4" />
                <circle cx="16.500" cy="8.500" r="2.600" fill="#fff" />
                <rect x="14.300" y="12.500" width="4.500" height="14" rx="1" fill="#f4f4f4" />
              </Svg>
              <DialogMessage><Label $ls={0.97}>객체 오류 내용이 저장되었습니다.</Label></DialogMessage>
            </DialogText>
            <DialogFoot><OkButton>확인</OkButton></DialogFoot>
          </Dialog>
        </MapFrame>
        <Dock $w={300}>
          <DockTitle>
            <Label $ls={1}>국토기본정보 검사</Label>
            <Grow />
            <CloseIcon />
          </DockTitle>
          <Inspect>
            <ListHead>
              <Label $ls={1}>오류 리스트</Label>
              <Grow />
              <SquareButton><Icon name="editDark" size={17} /></SquareButton>
              <SquareButton><Icon name="trashDark" size={17} /></SquareButton>
            </ListHead>
            <ErrorList>
              <ErrorRow>
                <Chev dir="right" c="#a0a0a0" />
                <Label $ls={0.6}>건물</Label>
              </ErrorRow>
            </ErrorList>
            <WideButton $mt={7}>오류 객체 선택</WideButton>
            <GroupBox>
              <Legend>오류 정보</Legend>
              <Field $h={20} $mb={17}><Label $ls={0.7}>객체 ID:</Label><Input /></Field>
              <Field $h={20} $mb={15}><Label $ls={0.95}>객체 속성:</Label><Input /></Field>
              <Field $h={50} $mb={12}><Label $ls={0.95}>오류 사유:</Label><Input $kind="area" /></Field>
              <Field $h={80} $mb={0}><Label $ls={0.95}>오류 이미지:</Label><Input $kind="image" /></Field>
            </GroupBox>
            <WideButton $mt={8}>오류 저장</WideButton>
            <WideButton $mt={8}>검사 완료</WideButton>
          </Inspect>
        </Dock>
      </Body>
      <Status>
        <Label $w={27} $ls={0.5}>좌표</Label>
        <StatusBox $w={150} $center $mr={3}><Label $ls={-0.3}>1057159,3,1752494,6</Label></StatusBox>
        <Icon name="mouse" size={16} />
        <Space $w={13} />
        <Label $w={27} $ls={0.5}>축척</Label>
        <StatusBox $w={87} $mr={3}>
          <Label $ls={-0.1}>1:500</Label>
          <ComboArrow><Chev dir="down" w={1.2} /></ComboArrow>
        </StatusBox>
        <Icon name="lock" size={16} />
        <Space $w={13} />
        <Label $w={55} $ls={0.15}>Magnifier</Label>
        <StatusBox $w={71} $mr={9}><Label $ls={-0.3}>100%</Label><Spin /></StatusBox>
        <Label $w={33} $ls={0.5}>회전</Label>
        <StatusBox $w={71} $mr={6}><Label>0,0</Label><Spin /></StatusBox>
        <Checked />
        <Label $w={52} $ls={0.5}>렌더링</Label>
        <Icon name="crs" size={16} />
        <Space $w={4} />
        <Label $w={82} $ls={0.3}>EPSG:5179</Label>
        <Icon name="bubble" size={17} />
      </Status>
    </Window>
  );
}
